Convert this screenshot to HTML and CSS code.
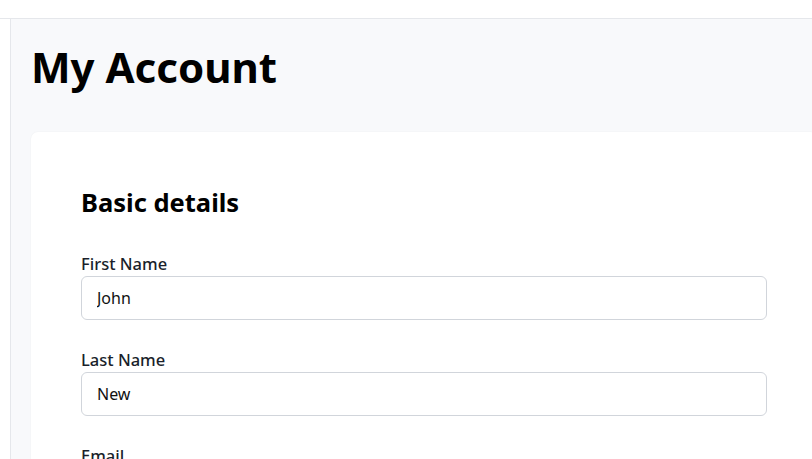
FILE: index.html
```html
<!DOCTYPE html>
<html>
<head>
<meta charset="utf-8">
<link rel="stylesheet" href="styles.css">
</head>
<body>
<div class="topbar"></div>
<div class="layout">
  <aside class="sidebar"></aside>
  <main class="main">
    <h1 class="title">My Account</h1>
    <section class="card">
      <h2 class="card-title">Basic details</h2>
      <div class="field">
        <label class="label">First Name</label>
        <input class="input" type="text" value="John">
      </div>
      <div class="field">
        <label class="label">Last Name</label>
        <input class="input" type="text" value="New">
      </div>
      <div class="field">
        <label class="label">Email</label>
        <input class="input" type="text" value="">
      </div>
    </section>
  </main>
</div>
</body>
</html>
```
FILE: styles.css
```css
html, body {
  margin: 0;
  padding: 0;
  height: 100%;
  overflow: hidden;
  background: #ffffff;
  font-family: "Noto Sans", "Open Sans", sans-serif;
  color: #111;
}
.topbar {
  height: 18px;
  border-bottom: 1px solid #e5e7eb;
  background: #fff;
}
.layout {
  display: flex;
  height: calc(100% - 19px);
}
.sidebar {
  width: 10px;
  flex: none;
  border-right: 1px solid #e5e7eb;
  background: #fff;
}
.main {
  flex: 1;
  background: #f8f9fb;
  padding: 0 0 0 20px;
  overflow: hidden;
}
.title {
  margin: 18px 0 0 0;
  font-size: 42px;
  font-weight: 700;
  line-height: 60px;
  color: #000;
}
.card {
  margin-top: 35px;
  width: 686px;
  background: #fff;
  border-radius: 7px;
  box-shadow: 0 0 2px rgba(0,0,0,0.05);
  padding: 50px 50px 50px 50px;
}
.card-title {
  margin: 0 0 30px 0;
  font-size: 25.5px;
  font-weight: 700;
  line-height: 40px;
  color: #000;
}
.field {
  display: flex;
  flex-direction: column;
  margin-bottom: 28px;
}
.label {
  font-size: 16.5px;
  font-weight: 500;
  line-height: 24px;
  color: #1a1f2b;
}
.input {
  box-sizing: border-box;
  height: 44px;
  width: 100%;
  border: 1px solid #d1d5db;
  border-radius: 6px;
  padding: 0 15px;
  font-family: inherit;
  font-size: 16px;
  color: #111;
  background: #fff;
  outline: none;
}
```
